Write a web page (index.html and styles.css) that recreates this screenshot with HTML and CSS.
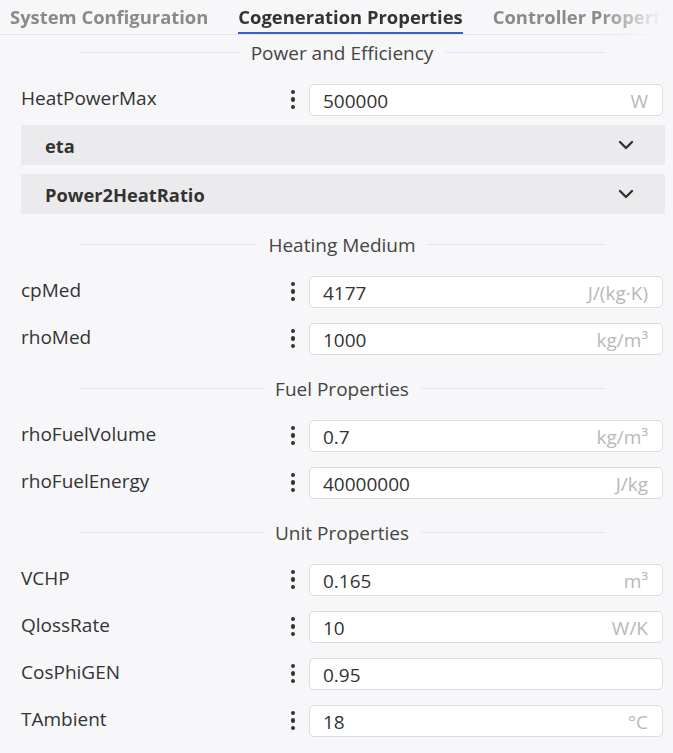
FILE: index.html
```html
<!DOCTYPE html>
<html>
<head>
<meta charset="utf-8">
<link rel="stylesheet" href="styles.css">
</head>
<body>
<div class="panel">
  <div class="tabs">
    <div class="tab">System Configuration</div>
    <div class="tab active">Cogeneration Properties</div>
    <div class="tab">Controller Properties</div>
  </div>
  <div class="content">
    <div class="section first">
      <div class="sec-head"><span class="line"></span><span class="sec-title">Power and Efficiency</span><span class="line"></span></div>
      <div class="row"><div class="label">HeatPowerMax</div><div class="kebab"><i></i><i></i><i></i></div><div class="input"><span class="val">500000</span><span class="unit">W</span></div></div>
      <div class="group"><span class="gtitle">eta</span><svg class="chev" width="16" height="10" viewBox="0 0 16 10"><path d="M2 2 L8 8 L14 2" fill="none" stroke="#333" stroke-width="2.4" stroke-linecap="round" stroke-linejoin="round"/></svg></div>
      <div class="group"><span class="gtitle">Power2HeatRatio</span><svg class="chev" width="16" height="10" viewBox="0 0 16 10"><path d="M2 2 L8 8 L14 2" fill="none" stroke="#333" stroke-width="2.4" stroke-linecap="round" stroke-linejoin="round"/></svg></div>
    </div>
    <div class="section">
      <div class="sec-head"><span class="line"></span><span class="sec-title">Heating Medium</span><span class="line"></span></div>
      <div class="row"><div class="label">cpMed</div><div class="kebab"><i></i><i></i><i></i></div><div class="input"><span class="val">4177</span><span class="unit">J/(kg·K)</span></div></div>
      <div class="row"><div class="label">rhoMed</div><div class="kebab"><i></i><i></i><i></i></div><div class="input"><span class="val">1000</span><span class="unit">kg/m³</span></div></div>
    </div>
    <div class="section">
      <div class="sec-head"><span class="line"></span><span class="sec-title">Fuel Properties</span><span class="line"></span></div>
      <div class="row"><div class="label">rhoFuelVolume</div><div class="kebab"><i></i><i></i><i></i></div><div class="input"><span class="val">0.7</span><span class="unit">kg/m³</span></div></div>
      <div class="row"><div class="label">rhoFuelEnergy</div><div class="kebab"><i></i><i></i><i></i></div><div class="input"><span class="val">40000000</span><span class="unit">J/kg</span></div></div>
    </div>
    <div class="section">
      <div class="sec-head"><span class="line"></span><span class="sec-title">Unit Properties</span><span class="line"></span></div>
      <div class="row"><div class="label">VCHP</div><div class="kebab"><i></i><i></i><i></i></div><div class="input"><span class="val">0.165</span><span class="unit">m³</span></div></div>
      <div class="row"><div class="label">QlossRate</div><div class="kebab"><i></i><i></i><i></i></div><div class="input"><span class="val">10</span><span class="unit">W/K</span></div></div>
      <div class="row"><div class="label">CosPhiGEN</div><div class="kebab"><i></i><i></i><i></i></div><div class="input"><span class="val">0.95</span><span class="unit"></span></div></div>
      <div class="row"><div class="label">TAmbient</div><div class="kebab"><i></i><i></i><i></i></div><div class="input"><span class="val">18</span><span class="unit">°C</span></div></div>
    </div>
  </div>
</div>
</body>
</html>
```
FILE: styles.css
```css
html, body {
  margin: 0;
  padding: 0;
  background: #f7f7f9;
}
body {
  font-family: "Open Sans", "Noto Sans", sans-serif;
  color: #333;
  width: 673px;
  height: 753px;
  overflow: hidden;
}
.panel {
  width: 665px;
}
.tabs {
  display: flex;
  gap: 30px;
  padding-left: 10px;
  height: 35px;
  box-sizing: border-box;
  border-bottom: 1px solid #e6e6e8;
  overflow: hidden;
  white-space: nowrap;
  -webkit-mask-image: linear-gradient(to right, #000 0, #000 600px, transparent 662px);
  mask-image: linear-gradient(to right, #000 0, #000 600px, transparent 662px);
}
.tab {
  font-size: 18.4px;
  font-weight: 700;
  color: #8a8a8a;
  line-height: 33px;
  height: 35px;
  box-sizing: border-box;
  flex: none;
}
.tab.active {
  color: #333;
  border-bottom: 3px solid #3c5fc4;
  line-height: 33px;
}
.content {
  padding-left: 21px;
}
.section {
  margin-top: 9px;
}
.section.first {
  margin-top: 0;
  padding-bottom: 4px;
}
.sec-head {
  display: flex;
  align-items: center;
  height: 41px;
  padding-bottom: 6px;
  box-sizing: border-box;
  margin: 0 61px 0 59px;
}
.line {
  flex: 1;
  height: 1px;
  background: #e4e4e6;
}
.sec-title {
  font-size: 19px;
  color: #444;
  padding: 0 12px;
}
.row {
  display: flex;
  align-items: center;
  height: 47px;
}
.label {
  flex: 1;
  font-size: 19px;
  color: #333;
  padding-bottom: 3px;
}
.kebab {
  width: 20px;
  margin-right: 6px;
  display: flex;
  flex-direction: column;
  align-items: center;
  gap: 3px;
}
.kebab i {
  display: block;
  width: 4.5px;
  height: 4.5px;
  border-radius: 50%;
  background: #333;
}
.input {
  width: 354px;
  height: 32px;
  box-sizing: border-box;
  margin-right: 2px;
  border: 1px solid #dcdcde;
  border-radius: 5px;
  background: #fff;
  display: flex;
  align-items: center;
  justify-content: space-between;
  padding: 2px 14px 0 13px;
  font-size: 19px;
}
.val {
  color: #333;
}
.unit {
  color: #b8b8b8;
}
.group {
  height: 40px;
  margin-top: 2px;
  background: #ebebed;
  display: flex;
  align-items: center;
  justify-content: space-between;
  padding: 0 31px 0 24px;
}
.group + .group {
  margin-top: 9px;
}
.gtitle {
  font-size: 18.3px;
  font-weight: 700;
  color: #333;
}
.chev {
  display: block;
}
```
